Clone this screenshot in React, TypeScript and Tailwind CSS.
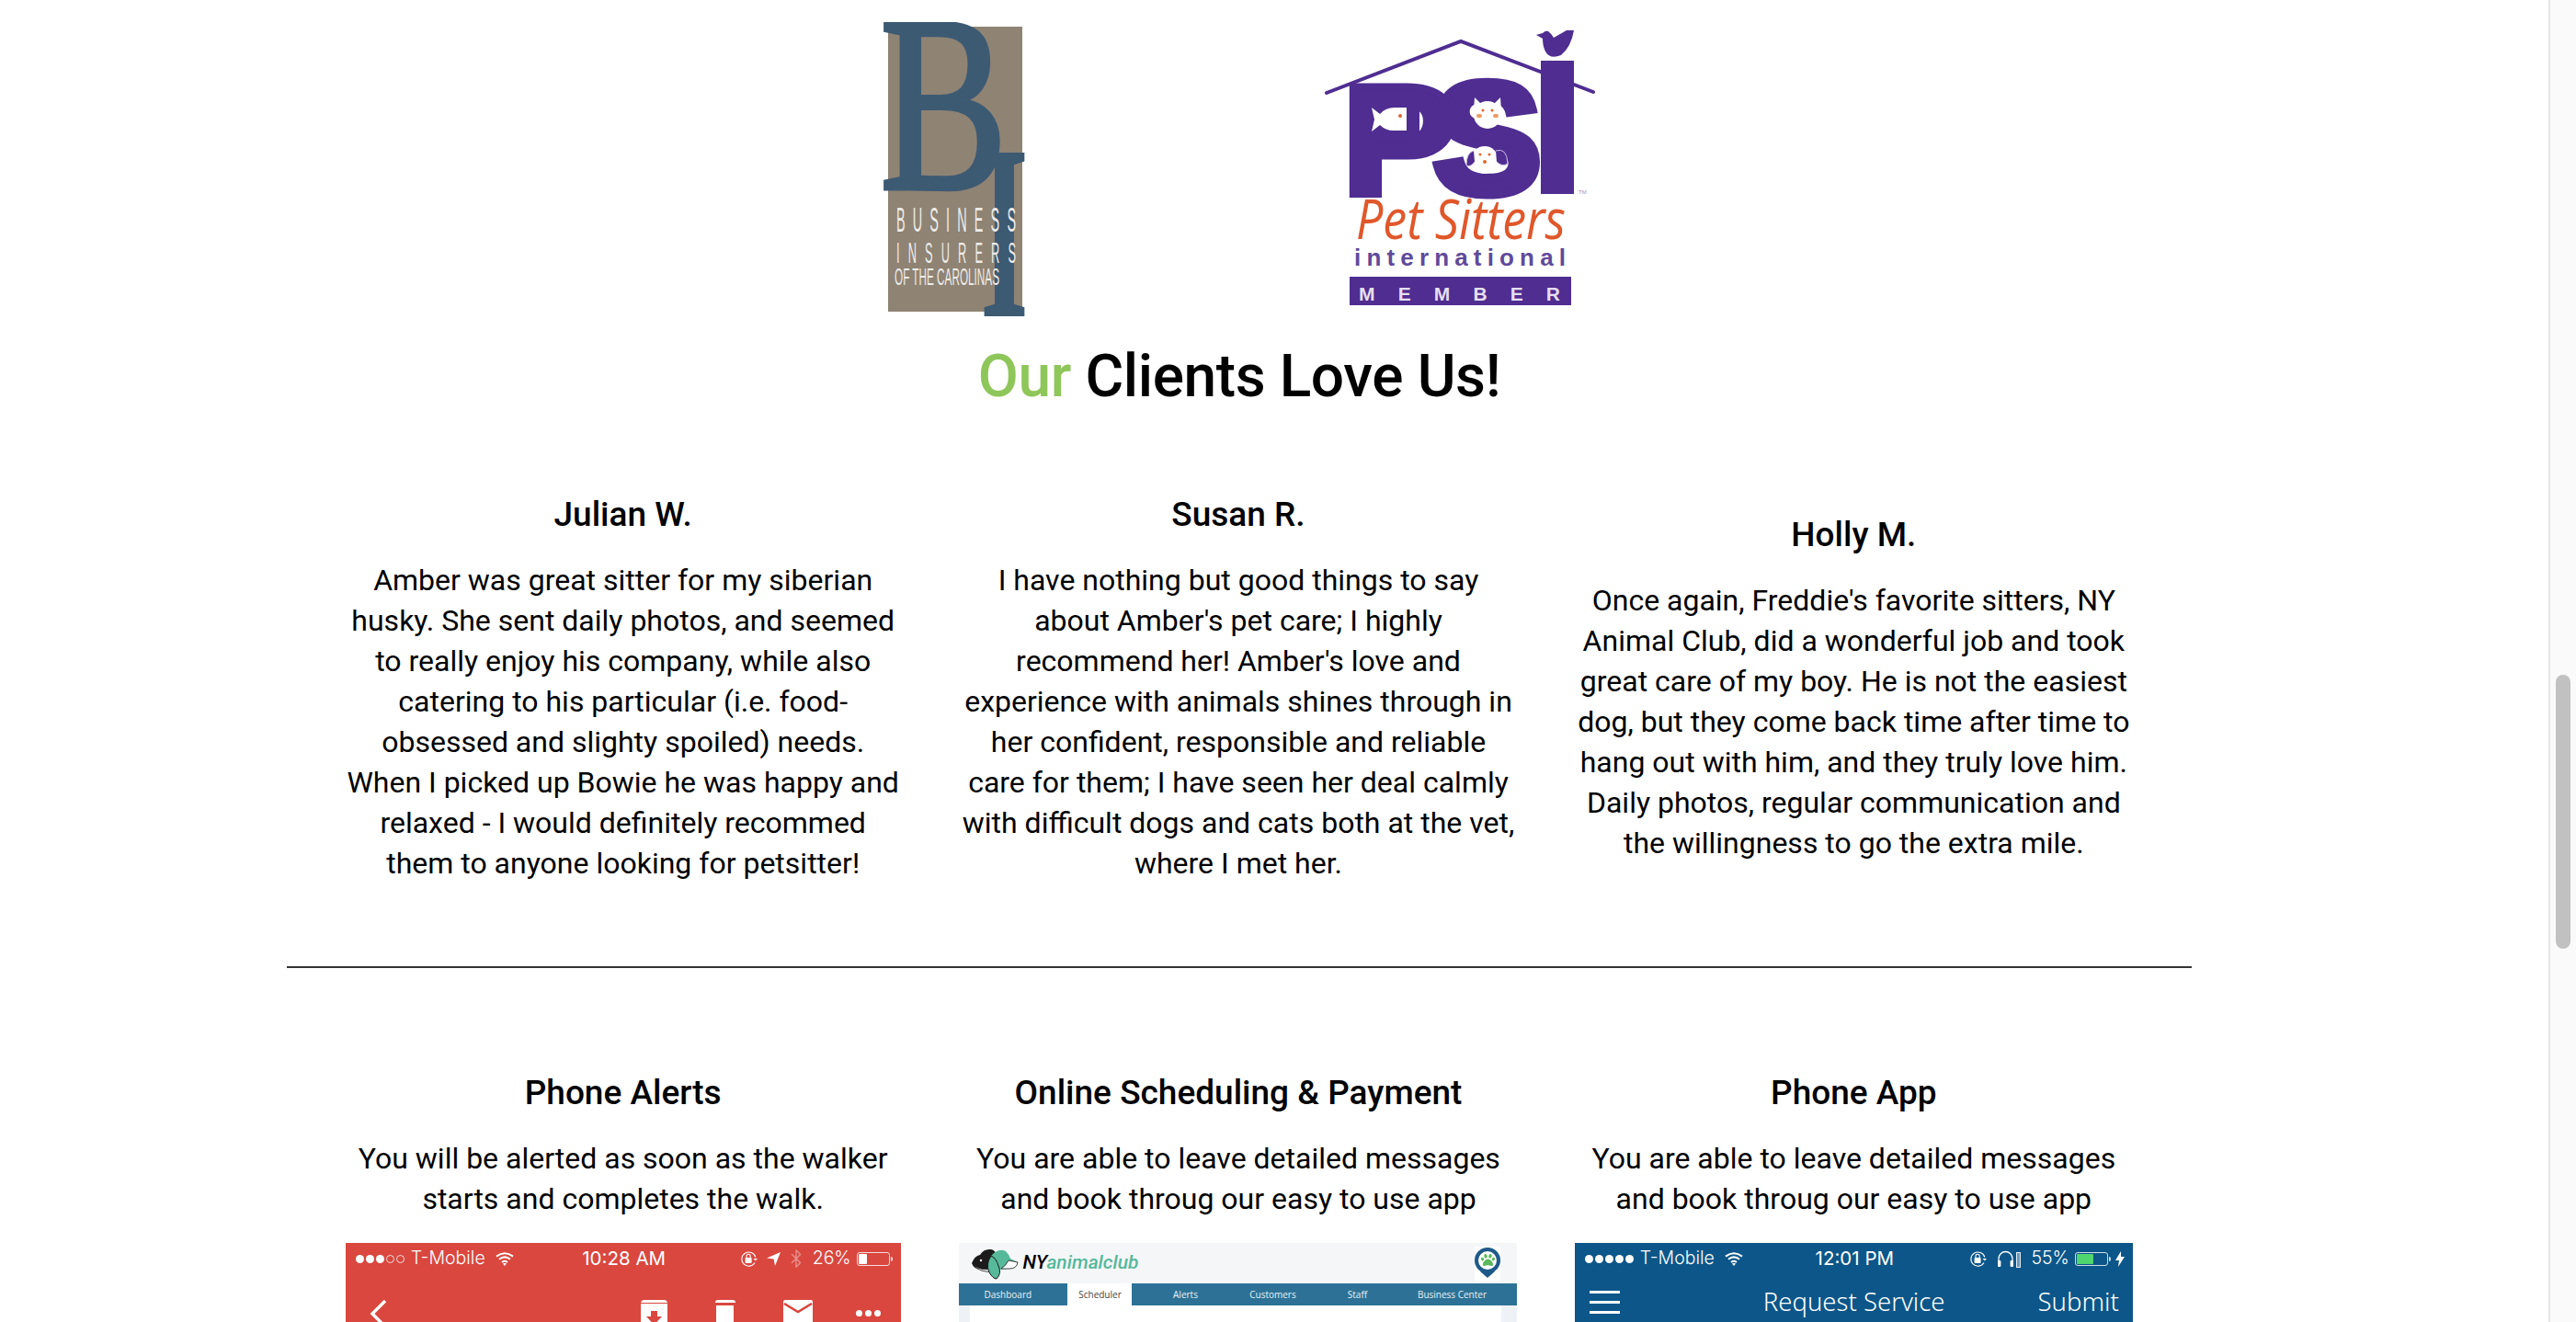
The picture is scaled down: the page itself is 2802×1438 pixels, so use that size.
import { Bluetooth } from "lucide-react";
import { FaPaw } from "react-icons/fa";

const reviews = [
  {
    name: "Julian W.",
    text: "Amber was great sitter for my siberian husky. She sent daily photos, and seemed to really enjoy his company, while also catering to his particular (i.e. food-obsessed and slighty spoiled) needs. When I picked up Bowie he was happy and relaxed - I would definitely recommed them to anyone looking for petsitter!",
    offset: "",
  },
  {
    name: "Susan R.",
    text: "I have nothing but good things to say about Amber's pet care; I highly recommend her! Amber's love and experience with animals shines through in her confident, responsible and reliable care for them; I have seen her deal calmly with difficult dogs and cats both at the vet, where I met her.",
    offset: "",
  },
  {
    name: "Holly M.",
    text: "Once again, Freddie's favorite sitters, NY Animal Club, did a wonderful job and took great care of my boy. He is not the easiest dog, but they come back time after time to hang out with him, and they truly love him. Daily photos, regular communication and the willingness to go the extra mile.",
    offset: "pt-[22px]",
  },
];

function BusinessInsurersLogo() {
  return (
    <svg width="161" height="321" viewBox="0 0 161 321" className="shrink-0">
      <rect x="9" y="5" width="146" height="310" fill="#8f8374" />
      <text transform="translate(0 181) scale(0.76 1)" fontFamily="'Liberation Serif', serif" fontSize="274" fill="#3d5a73" stroke="#3d5a73" strokeWidth="5">
        B
      </text>
      <text transform="translate(109 320) scale(0.5 1)" fontFamily="'Liberation Serif', serif" fontWeight="700" fontSize="272" fill="#3d5a73">
        I
      </text>
      <text transform="translate(18 228) scale(0.4 1)" fontFamily="'Liberation Sans', sans-serif" fontSize="36" fill="#eeece8" textLength="325" lengthAdjust="spacing">
        BUSINESS
      </text>
      <text transform="translate(18 262) scale(0.4 1)" fontFamily="'Liberation Sans', sans-serif" fontSize="32" fill="#eeece8" textLength="325" lengthAdjust="spacing">
        INSURERS
      </text>
      <text transform="translate(16 286) scale(0.5 1)" fontFamily="'Liberation Sans', sans-serif" fontSize="25" fill="#eeece8" textLength="228" lengthAdjust="spacingAndGlyphs">
        OF THE CAROLINAS
      </text>
    </svg>
  );
}

function PsiLogo() {
  const purple = "#4f2d91";
  return (
    <svg width="320" height="320" viewBox="0 0 320 320" className="shrink-0">
      <path d="M13 77 L159 21 L303 76" fill="none" stroke={purple} strokeWidth="4" strokeLinecap="round" />
      <text transform="translate(29 187) scale(1.12 1)" fontFamily="'Liberation Sans', sans-serif" fontWeight="700" fontSize="170" fill={purple} stroke={purple} strokeWidth="7">
        P
      </text>
      <text transform="translate(128 186) scale(1.04 1)" fontFamily="'Liberation Sans', sans-serif" fontWeight="700" fontSize="172" fill={purple} stroke={purple} strokeWidth="9">
        S
      </text>
      <rect x="246" y="42" width="36" height="145" fill={purple} />
      <path d="M241 14 l7 -2 q3 -3 6 -2 q4 3 6 7 l14 -8 l8 0 q-3 18 -14 27 q-12 5 -17 -4 q-3 -6 -3 -14 z" fill={purple} />
      {/* fish */}
      <rect x="60" y="84" width="54" height="44" fill={purple} />
      <path d="M62 93 l9 7 q6 -7 16 -7 h13 v25 h-14 q-9 0 -15 -6 l-9 7 l3 -13 z" fill="#fff" />
      <circle cx="93" cy="102" r="2" fill="#e0662f" />
      {/* cat */}
      <circle cx="188" cy="101" r="15" fill="#fff" />
      <path d="M174 82 l8 8 h12 l8 -8 l1 14 h-30 z" fill="#fff" />
      <circle cx="183" cy="96" r="1.5" fill="#e0662f" />
      <circle cx="193" cy="96" r="1.5" fill="#e0662f" />
      <rect x="176" y="100" width="6" height="4" rx="2" fill="#ee9a62" />
      <rect x="194" y="100" width="6" height="4" rx="2" fill="#ee9a62" />
      {/* dog */}
      <circle cx="185" cy="150" r="15" fill="#fff" />
      <path d="M173 140 q-8 2 -8 16 q5 2 9 -4 M197 140 q12 -4 13 14 q-6 4 -12 -2" fill={purple} stroke="#cdbfe4" strokeWidth="1" />
      <circle cx="180" cy="144" r="1.5" fill="#e0662f" />
      <circle cx="190" cy="144" r="1.5" fill="#e0662f" />
      <circle cx="185" cy="152" r="2" fill="#e0662f" />
      <text x="287" y="187" fontFamily="'Liberation Sans', sans-serif" fontSize="6" fill="#9c94b0">
        TM
      </text>
      <text x="45" y="236" fontFamily="'Open Sans', sans-serif" fontStyle="italic" fontSize="60" fill="#e0572a" textLength="228" lengthAdjust="spacingAndGlyphs">
        Pet Sitters
      </text>
      <text x="43" y="265" fontFamily="'Liberation Sans', sans-serif" fontWeight="700" fontSize="26" fill="#5f4a9a" textLength="230" lengthAdjust="spacing">
        international
      </text>
      <rect x="38" y="277" width="241" height="31" fill={purple} />
      <text x="48" y="303" fontFamily="'Liberation Sans', sans-serif" fontWeight="700" fontSize="21" fill="#e5dff0" textLength="219" lengthAdjust="spacing">
        MEMBER
      </text>
    </svg>
  );
}

function SignalDots({ filled }: { filled: number }) {
  return (
    <div className="flex gap-[2px]">
      {[0, 1, 2, 3, 4].map((i) => (
        <span
          key={i}
          className={
            i < filled
              ? "h-[9px] w-[9px] rounded-full bg-white"
              : "h-[9px] w-[9px] rounded-full border border-white/80"
          }
        />
      ))}
    </div>
  );
}

function Wifi() {
  return (
    <svg width="20" height="15" viewBox="0 0 20 15" fill="none" stroke="#fff" strokeWidth="2">
      <path d="M1 4.6 Q10 -2 19 4.6" />
      <path d="M4 7.8 Q10 3 16 7.8" />
      <path d="M7 11 Q10 8.6 13 11" />
      <path d="M8.6 12.6 L10 14.4 L11.4 12.6 Z" fill="#fff" strokeWidth="1" />
    </svg>
  );
}

function RotationLock() {
  return (
    <svg width="19" height="19" viewBox="0 0 19 19" fill="none">
      <path d="M16 13.5 A7.6 7.6 0 1 1 16.8 7.5" stroke="#fff" strokeWidth="1.1" />
      <path d="M14.5 9 h4.5 l-2.2 2.6 z" fill="#fff" />
      <rect x="5.6" y="8" width="7" height="6" rx="0.8" fill="#fff" />
      <path d="M7 8 V6.4 a2.1 2.1 0 0 1 4.2 0 V8" stroke="#fff" strokeWidth="1.1" />
    </svg>
  );
}

function Battery({ percent, fill }: { percent: number; fill: string }) {
  return (
    <div className="flex items-center">
      <div className="h-[15px] w-[36px] rounded-[3px] border border-white/80 p-px">
        <div className={`h-full rounded-[1px] ${fill}`} style={{ width: `${percent}%` }} />
      </div>
      <span className="ml-px h-[5px] w-[2px] rounded-r-full bg-white/80" />
    </div>
  );
}

function RedPhone() {
  return (
    <div className="mx-auto h-[86px] w-[604px] overflow-hidden bg-[#d9473f] font-['Inter',sans-serif] text-white">
      <div className="grid h-[34px] grid-cols-[1fr_auto_1fr] items-center pl-[11px] pr-[9px] text-[19.5px] font-light">
        <div className="flex items-center gap-[7px]">
          <SignalDots filled={3} />
          <span>T-Mobile</span>
          <span className="ml-[4px]">
            <Wifi />
          </span>
        </div>
        <span className="text-[20.5px] font-normal">10:28 AM</span>
        <div className="flex items-center justify-end">
          <RotationLock />
          <svg width="15" height="15" viewBox="0 0 15 15" className="ml-[10px]">
            <path d="M0 6.5 L15 0 L9 15 L7.6 7.4 Z" fill="#fff" />
          </svg>
          <Bluetooth size={22} strokeWidth={1.5} className="ml-[6px] text-white/40" />
          <span className="ml-[7px]">26%</span>
          <span className="ml-[6px]">
            <Battery percent={30} fill="bg-white" />
          </span>
        </div>
      </div>
      <div className="flex items-start pl-[26px] pr-[22px] pt-[28px]">
        <svg width="20" height="30" viewBox="0 0 20 30" fill="none" stroke="#fff" strokeWidth="3.4">
          <path d="M17 1 L3 15 L17 29" />
        </svg>
        <div className="ml-auto flex items-start">
          <div className="relative h-[40px] w-[29px] rounded-t-[4px] bg-white">
            <span className="absolute left-0 top-[3px] h-px w-full bg-[#d9473f]" />
            <svg width="17" height="15" viewBox="0 0 17 15" className="absolute left-[6px] top-[12px]">
              <path d="M5 0 H12 V6 H17 L8.5 15 L0 6 H5 Z" fill="#d9473f" />
            </svg>
          </div>
          <div className="ml-[52px] flex w-[22px] flex-col items-center">
            <span className="h-[3px] w-[22px] rounded-t-sm bg-white" />
            <span className="mt-[3px] h-[30px] w-[19px] bg-white" />
          </div>
          <div className="ml-[52px] h-[40px] w-[32px] rounded-[2px] bg-white pt-[3px]">
            <svg width="32" height="12" viewBox="0 0 32 12" fill="none" stroke="#d9473f" strokeWidth="2.6">
              <path d="M1 1 L16 10 L31 1" />
            </svg>
          </div>
          <div className="ml-[47px] mt-[11px] flex gap-[3px]">
            <span className="h-[7px] w-[7px] rounded-full bg-white" />
            <span className="h-[7px] w-[7px] rounded-full bg-white" />
            <span className="h-[7px] w-[7px] rounded-full bg-white" />
          </div>
        </div>
      </div>
    </div>
  );
}

function PetsMark() {
  return (
    <svg width="52" height="35" viewBox="0 0 52 35">
      <path d="M1 17 Q4 9 10 8 Q14 1 22 2 Q27 3 28 9 L27 24 Q18 28 10 24 Q3 23 1 17 Z" fill="#1b1b1b" />
      <path d="M2 18 Q10 26 24 23 L24 26 Q10 28 2 18 Z" fill="#fff" stroke="#1b1b1b" strokeWidth="0.8" />
      <path d="M22 9 Q30 0 38 4 Q42 8 43 12 L51 16 Q50 23 42 23 L31 24 Q28 10 22 9 Z" fill="#56ba9a" />
      <path d="M41 14 L51 16 Q50 23 42 23 L33 23 Q38 20 41 14 Z" fill="#fff" stroke="#1b1b1b" strokeWidth="0.8" />
      <path d="M22 9 Q16 18 20 27 Q24 34 28 34 Q34 28 30 20 Q28 12 22 9 Z" fill="#56ba9a" stroke="#1b1b1b" strokeWidth="1" />
      <circle cx="11" cy="14" r="1.2" fill="#fff" />
    </svg>
  );
}

function Scheduler() {
  const navClass = "text-[10px] text-white/90";
  return (
    <div className="mx-auto h-[86px] w-[607px] overflow-hidden bg-[#eef2f6] font-['Open_Sans',sans-serif]">
      <div className="flex h-[44px] items-center bg-[#f5f6f8] pl-[13px] pr-[18px]">
        <PetsMark />
        <span className="ml-[4px] font-['Roboto',sans-serif] text-[21px] font-medium italic">
          <span className="text-black">NY</span>
          <span className="text-[#55b89a]">animalclub</span>
        </span>
        <div className="ml-auto flex h-[37px] w-[28px] flex-col items-center bg-white">
          <div className="mt-[1px] flex h-[28px] w-[28px] items-center justify-center rounded-full border-[4px] border-[#1d5a8a]">
            <FaPaw size={15} className="text-[#5cb85c]" />
          </div>
          <span className="h-0 w-0 -translate-y-[2px] border-x-[8px] border-t-[7px] border-x-transparent border-t-[#1d5a8a]" />
        </div>
      </div>
      <div className="flex h-[24px] items-center bg-[#2d7296]">
        <div className={`w-[118px] pl-[27px] text-left ${navClass}`}>Dashboard</div>
        <div className="flex h-full w-[70px] items-center justify-center bg-white text-[10px] text-[#444]">Scheduler</div>
        <div className={`w-[116px] text-center ${navClass}`}>Alerts</div>
        <div className={`w-[74px] text-center ${navClass}`}>Customers</div>
        <div className={`w-[110px] text-center ${navClass}`}>Staff</div>
        <div className={`w-[96px] text-center ${navClass}`}>Business Center</div>
      </div>
      <div className="ml-[12px] mr-[17px] h-[18px] bg-white" />
    </div>
  );
}

function BluePhone() {
  return (
    <div className="mx-auto h-[86px] w-[607px] overflow-hidden bg-[#0c5689] font-['Inter',sans-serif] text-white">
      <div className="grid h-[34px] grid-cols-[1fr_auto_1fr] items-center pl-[11px] pr-[9px] text-[19.5px] font-light">
        <div className="flex items-center gap-[7px]">
          <SignalDots filled={5} />
          <span>T-Mobile</span>
          <span className="ml-[4px]">
            <Wifi />
          </span>
        </div>
        <span className="text-[20.5px] font-normal">12:01 PM</span>
        <div className="flex items-center justify-end">
          <RotationLock />
          <div className="ml-[11px] flex items-end gap-[2px]">
            <svg width="19" height="19" viewBox="0 0 19 19" fill="none">
              <path d="M2 16 V9 a7.5 7.5 0 0 1 15 0 V16" stroke="#fff" strokeWidth="1.3" />
              <rect x="1" y="11" width="3.4" height="7" rx="1" fill="#fff" />
              <rect x="14.6" y="11" width="3.4" height="7" rx="1" fill="#fff" />
            </svg>
            <span className="h-[17px] w-[5px] border border-white/80 bg-white/40" />
          </div>
          <span className="ml-[11px]">55%</span>
          <span className="ml-[6px]">
            <Battery percent={58} fill="bg-[#4fd66e]" />
          </span>
          <svg width="10" height="17" viewBox="0 0 10 17" className="ml-[5px]">
            <path d="M6 0 L0 10 H4 L3 17 L10 6 H6 Z" fill="#fff" />
          </svg>
        </div>
      </div>
      <div className="flex items-center pl-[16px] pr-[15px] pt-[8px] font-['Noto_Sans',sans-serif] text-[27.5px] font-light">
        <div className="flex w-[33px] flex-col gap-[8px]">
          <span className="h-[3px] bg-white" />
          <span className="h-[3px] bg-white" />
          <span className="h-[3px] bg-white" />
        </div>
        <span className="ml-[156px] leading-[44px]">Request Service</span>
        <span className="ml-auto leading-[44px]">Submit</span>
      </div>
    </div>
  );
}

export default function App() {
  return (
    <div className="flex h-[1438px] overflow-hidden bg-white font-['Roboto',sans-serif] text-black">
      <main className="flex-1 pl-[312px] pr-[388px] pt-[24px]">
        <div className="flex h-[321px] gap-[312px] pl-[645px]">
          <BusinessInsurersLogo />
          <PsiLogo />
        </div>
        <h1 className="mt-[27px] text-center text-[64px] font-medium leading-[76px] tracking-[-0.4px]">
          <span className="text-[#8fc65a]">Our</span> Clients Love Us!
        </h1>
        <div className="mt-[88px] grid grid-cols-3 pl-[31px] pr-[33px]">
          {reviews.map((r) => (
            <div key={r.name} className={`px-[32px] text-center ${r.offset}`}>
              <h3 className="text-[37px] font-medium leading-[48px]">{r.name}</h3>
              <p className="mt-[25px] text-[32px] leading-[44px]">{r.text}</p>
            </div>
          ))}
        </div>
        <hr className="mt-[90px] border-t-2 border-[#333]" />
        <div className="mt-[112px] grid grid-cols-3 pl-[31px] pr-[33px]">
          <div className="text-center">
            <h3 className="text-[37px] font-medium leading-[48px]">Phone Alerts</h3>
            <p className="mx-auto mt-[25px] max-w-[605px] text-[32px] leading-[44px]">
              You will be alerted as soon as the walker starts and completes the walk.
            </p>
            <div className="mt-[26px]">
              <RedPhone />
            </div>
          </div>
          <div className="text-center">
            <h3 className="text-[37px] font-medium leading-[48px]">Online Scheduling &amp; Payment</h3>
            <p className="mx-auto mt-[25px] max-w-[605px] text-[32px] leading-[44px]">
              You are able to leave detailed messages and book throug our easy to use app
            </p>
            <div className="mt-[26px]">
              <Scheduler />
            </div>
          </div>
          <div className="text-center">
            <h3 className="text-[37px] font-medium leading-[48px]">Phone App</h3>
            <p className="mx-auto mt-[25px] max-w-[605px] text-[32px] leading-[44px]">
              You are able to leave detailed messages and book throug our easy to use app
            </p>
            <div className="mt-[26px]">
              <BluePhone />
            </div>
          </div>
        </div>
      </main>
      <aside className="w-[30px] shrink-0 border-l-2 border-[#e6e6e6] bg-[#fafafa] pl-[6px] pt-[734px]">
        <div className="h-[298px] w-[16px] rounded-full bg-[#c1c1c1]" />
      </aside>
    </div>
  );
}
